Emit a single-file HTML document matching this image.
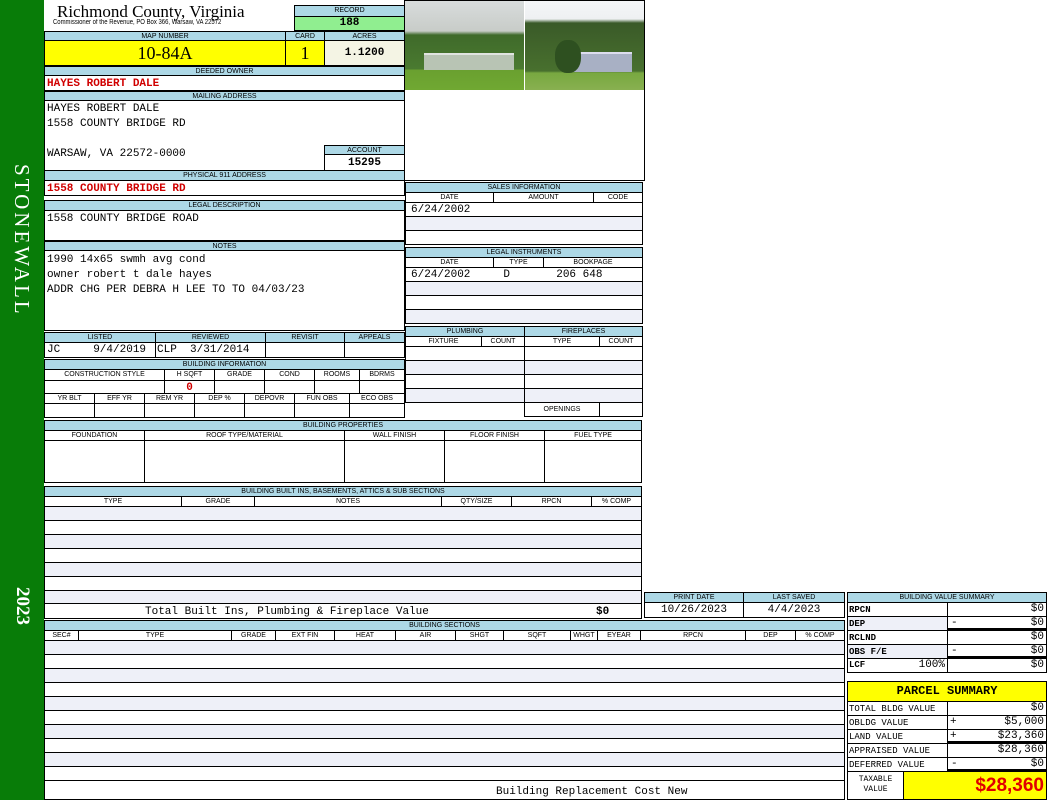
<!DOCTYPE html>
<html><head><style>
*{margin:0;padding:0;box-sizing:border-box}
body{width:1050px;height:800px;background:#fff;position:relative;overflow:hidden;font-family:"Liberation Sans",sans-serif}
div{position:absolute}
.h{background:#add8e6;border:1px solid #000;font-size:7px;text-align:center;line-height:9px;white-space:nowrap;overflow:hidden}
.c{border:1px solid #000;background:#fff}
.s{background:#eef0f8}
.m{font-family:"Liberation Mono",monospace;font-size:11px;white-space:nowrap}
.r{color:#d00000;font-weight:bold}
</style></head><body>
<div style="left:0;top:0;width:44px;height:800px;background:#087c08"></div>
<div style="left:9px;top:164px;writing-mode:vertical-rl;color:#fff;font:21px 'Liberation Serif',serif;letter-spacing:3px">STONEWALL</div>
<div style="left:11px;top:587px;writing-mode:vertical-rl;color:#fff;font:bold 19px 'Liberation Serif',serif">2023</div>

<div style="left:57px;top:2px;font:17px 'Liberation Serif',serif;white-space:nowrap">Richmond County, Virginia</div>
<div style="left:53px;top:19px;font-size:7px;white-space:nowrap;transform:scaleX(0.85);transform-origin:left">Commissioner of the Revenue, PO Box 366, Warsaw, VA 22572</div>
<div class="h" style="left:294px;top:5px;width:111px;height:12px;line-height:10px">RECORD</div>
<div class="c m" style="left:294px;top:16px;width:111px;height:15px;background:#90ee90;text-align:center;font-weight:bold;line-height:13px">188</div>

<div class="h" style="left:44px;top:31px;width:242px;height:10px">MAP NUMBER</div>
<div class="h" style="left:285px;top:31px;width:40px;height:10px">CARD</div>
<div class="h" style="left:324px;top:31px;width:81px;height:10px">ACRES</div>
<div class="c" style="left:44px;top:40px;width:242px;height:26px;background:#ffff00;text-align:center;font:18px 'Liberation Serif',serif;line-height:24px">10-84A</div>
<div class="c" style="left:285px;top:40px;width:40px;height:26px;background:#ffff00;text-align:center;font:18px 'Liberation Serif',serif;line-height:24px">1</div>
<div class="c m" style="left:324px;top:40px;width:81px;height:26px;background:#f4f4e4;text-align:center;font-weight:bold;line-height:24px">1.1200</div>

<div class="h" style="left:44px;top:66px;width:361px;height:10px">DEEDED OWNER</div>
<div class="c m r" style="left:44px;top:75px;width:361px;height:16px;padding-left:2px;line-height:16px">HAYES ROBERT DALE</div>
<div class="h" style="left:44px;top:91px;width:361px;height:10px">MAILING ADDRESS</div>
<div class="c m" style="left:44px;top:100px;width:361px;height:71px;padding-left:2px;line-height:15px;padding-top:1px">HAYES ROBERT DALE<br>1558 COUNTY BRIDGE RD<br><br>WARSAW, VA 22572-0000</div>
<div class="h" style="left:324px;top:145px;width:81px;height:10px">ACCOUNT</div>
<div class="c m" style="left:324px;top:154px;width:81px;height:17px;text-align:center;font-weight:bold;line-height:16px">15295</div>
<div class="h" style="left:44px;top:170px;width:361px;height:11px">PHYSICAL 911 ADDRESS</div>
<div class="c m r" style="left:44px;top:180px;width:361px;height:16px;padding-left:2px;line-height:16px">1558 COUNTY BRIDGE RD</div>

<div class="h" style="left:44px;top:200px;width:361px;height:11px">LEGAL DESCRIPTION</div>
<div class="c m" style="left:44px;top:210px;width:361px;height:31px;padding-left:2px;line-height:17px">1558 COUNTY BRIDGE ROAD</div>
<div class="h" style="left:44px;top:241px;width:361px;height:10px">NOTES</div>
<div class="c m" style="left:44px;top:250px;width:361px;height:81px;padding-left:2px;line-height:15px;padding-top:2px">1990 14x65 swmh avg cond<br>owner robert t dale hayes<br>ADDR CHG PER DEBRA H LEE TO TO 04/03/23</div>

<div class="h" style="left:44px;top:332px;width:112px;height:11px">LISTED</div>
<div class="h" style="left:155px;top:332px;width:111px;height:11px">REVIEWED</div>
<div class="h" style="left:265px;top:332px;width:80px;height:11px">REVISIT</div>
<div class="h" style="left:344px;top:332px;width:61px;height:11px">APPEALS</div>
<div class="c m" style="left:44px;top:342px;width:112px;height:16px;padding-left:2px;line-height:15px">JC&nbsp;&nbsp;&nbsp;&nbsp;&nbsp;9/4/2019</div>
<div class="c m" style="left:155px;top:342px;width:111px;height:16px;padding-left:1px;line-height:15px">CLP&nbsp;&nbsp;3/31/2014</div>
<div class="c" style="left:265px;top:342px;width:80px;height:16px"></div>
<div class="c" style="left:344px;top:342px;width:61px;height:16px"></div>

<div class="h" style="left:44px;top:359px;width:361px;height:11px">BUILDING INFORMATION</div>
<div class="h" style="left:44px;top:369px;width:121px;height:12px;background:#fff;line-height:10px">CONSTRUCTION STYLE</div>
<div class="h" style="left:164px;top:369px;width:51px;height:12px;background:#fff;line-height:10px">H SQFT</div>
<div class="h" style="left:214px;top:369px;width:51px;height:12px;background:#fff;line-height:10px">GRADE</div>
<div class="h" style="left:264px;top:369px;width:51px;height:12px;background:#fff;line-height:10px">COND</div>
<div class="h" style="left:314px;top:369px;width:46px;height:12px;background:#fff;line-height:10px">ROOMS</div>
<div class="h" style="left:359px;top:369px;width:46px;height:12px;background:#fff;line-height:10px">BDRMS</div>
<div class="c" style="left:44px;top:380px;width:121px;height:14px"></div>
<div class="c m r" style="left:164px;top:380px;width:51px;height:14px;text-align:center;line-height:14px">0</div>
<div class="c" style="left:214px;top:380px;width:51px;height:14px"></div>
<div class="c" style="left:264px;top:380px;width:51px;height:14px"></div>
<div class="c" style="left:314px;top:380px;width:46px;height:14px"></div>
<div class="c" style="left:359px;top:380px;width:46px;height:14px"></div>
<div class="h" style="left:44px;top:393px;width:51px;height:11px;background:#fff">YR BLT</div>
<div class="h" style="left:94px;top:393px;width:51px;height:11px;background:#fff">EFF YR</div>
<div class="h" style="left:144px;top:393px;width:51px;height:11px;background:#fff">REM YR</div>
<div class="h" style="left:194px;top:393px;width:51px;height:11px;background:#fff">DEP %</div>
<div class="h" style="left:244px;top:393px;width:51px;height:11px;background:#fff">DEPOVR</div>
<div class="h" style="left:294px;top:393px;width:56px;height:11px;background:#fff">FUN OBS</div>
<div class="h" style="left:349px;top:393px;width:56px;height:11px;background:#fff">ECO OBS</div>
<div class="c" style="left:44px;top:403px;width:51px;height:15px"></div>
<div class="c" style="left:94px;top:403px;width:51px;height:15px"></div>
<div class="c" style="left:144px;top:403px;width:51px;height:15px"></div>
<div class="c" style="left:194px;top:403px;width:51px;height:15px"></div>
<div class="c" style="left:244px;top:403px;width:51px;height:15px"></div>
<div class="c" style="left:294px;top:403px;width:56px;height:15px"></div>
<div class="c" style="left:349px;top:403px;width:56px;height:15px"></div>

<!-- photos -->
<div class="c" style="left:404px;top:0;width:241px;height:181px"></div>
<div style="left:405px;top:1px;width:119px;height:89px;background:linear-gradient(#d8dcdc 0,#c8ccc8 30px,#3f6a2a 34px,#4a7a30 68px,#6aa030 69px,#70a832 89px)"></div>
<div style="left:424px;top:53px;width:90px;height:17px;background:#b8c4b4;border-top:2px solid #e0e4e0"></div>
<div style="left:525px;top:1px;width:119px;height:89px;background:linear-gradient(#f4f6f8 0,#eef0f2 18px,#3a5a28 22px,#48702e 70px,#78a840 72px,#88b050 89px)"></div>
<div style="left:570px;top:52px;width:62px;height:20px;background:#a8b0c4;border-top:2px solid #dde"></div>
<div style="left:555px;top:40px;width:26px;height:33px;background:#2e5020;border-radius:45%"></div>

<div class="h" style="left:405px;top:182px;width:238px;height:11px">SALES INFORMATION</div>
<div class="h" style="left:405px;top:192px;width:89px;height:11px;background:#fff">DATE</div>
<div class="h" style="left:493px;top:192px;width:101px;height:11px;background:#fff">AMOUNT</div>
<div class="h" style="left:593px;top:192px;width:50px;height:11px;background:#fff">CODE</div>
<div class="c m" style="left:405px;top:202px;width:238px;height:15px;padding-left:5px;line-height:15px">6/24/2002</div>
<div class="c s" style="left:405px;top:216px;width:238px;height:15px"></div>
<div class="c" style="left:405px;top:230px;width:238px;height:15px"></div>

<div class="h" style="left:405px;top:247px;width:238px;height:11px">LEGAL INSTRUMENTS</div>
<div class="h" style="left:405px;top:257px;width:89px;height:11px;background:#fff">DATE</div>
<div class="h" style="left:493px;top:257px;width:51px;height:11px;background:#fff">TYPE</div>
<div class="h" style="left:543px;top:257px;width:100px;height:11px;background:#fff">BOOKPAGE</div>
<div class="c m" style="left:405px;top:267px;width:238px;height:15px;padding-left:5px;line-height:15px;white-space:pre">6/24/2002     D       206 648</div>
<div class="c s" style="left:405px;top:281px;width:238px;height:15px"></div>
<div class="c" style="left:405px;top:295px;width:238px;height:15px"></div>
<div class="c s" style="left:405px;top:309px;width:238px;height:15px"></div>

<div class="h" style="left:405px;top:326px;width:120px;height:11px">PLUMBING</div>
<div class="h" style="left:524px;top:326px;width:119px;height:11px">FIREPLACES</div>
<div class="h" style="left:405px;top:336px;width:77px;height:11px;background:#fff">FIXTURE</div>
<div class="h" style="left:481px;top:336px;width:44px;height:11px;background:#fff">COUNT</div>
<div class="h" style="left:524px;top:336px;width:76px;height:11px;background:#fff">TYPE</div>
<div class="h" style="left:599px;top:336px;width:44px;height:11px;background:#fff">COUNT</div>
<div class="c" style="left:405px;top:346px;width:120px;height:15px"></div><div class="c" style="left:524px;top:346px;width:119px;height:15px"></div>
<div class="c s" style="left:405px;top:360px;width:120px;height:15px"></div><div class="c s" style="left:524px;top:360px;width:119px;height:15px"></div>
<div class="c" style="left:405px;top:374px;width:120px;height:15px"></div><div class="c" style="left:524px;top:374px;width:119px;height:15px"></div>
<div class="c s" style="left:405px;top:388px;width:120px;height:15px"></div><div class="c s" style="left:524px;top:388px;width:119px;height:15px"></div>
<div class="h" style="left:524px;top:402px;width:76px;height:15px;background:#fff;line-height:14px">OPENINGS</div>
<div class="c" style="left:599px;top:402px;width:44px;height:15px"></div>

<div class="h" style="left:44px;top:420px;width:598px;height:11px">BUILDING PROPERTIES</div>
<div class="h" style="left:44px;top:430px;width:101px;height:11px;background:#fff">FOUNDATION</div>
<div class="h" style="left:144px;top:430px;width:201px;height:11px;background:#fff">ROOF TYPE/MATERIAL</div>
<div class="h" style="left:344px;top:430px;width:101px;height:11px;background:#fff">WALL FINISH</div>
<div class="h" style="left:444px;top:430px;width:101px;height:11px;background:#fff">FLOOR FINISH</div>
<div class="h" style="left:544px;top:430px;width:98px;height:11px;background:#fff">FUEL TYPE</div>
<div class="c" style="left:44px;top:440px;width:101px;height:43px"></div>
<div class="c" style="left:144px;top:440px;width:201px;height:43px"></div>
<div class="c" style="left:344px;top:440px;width:101px;height:43px"></div>
<div class="c" style="left:444px;top:440px;width:101px;height:43px"></div>
<div class="c" style="left:544px;top:440px;width:98px;height:43px"></div>

<div class="h" style="left:44px;top:486px;width:598px;height:11px">BUILDING BUILT INS, BASEMENTS, ATTICS &amp; SUB SECTIONS</div>
<div class="h" style="left:44px;top:496px;width:138px;height:11px;background:#fff">TYPE</div>
<div class="h" style="left:181px;top:496px;width:74px;height:11px;background:#fff">GRADE</div>
<div class="h" style="left:254px;top:496px;width:188px;height:11px;background:#fff">NOTES</div>
<div class="h" style="left:441px;top:496px;width:71px;height:11px;background:#fff">QTY/SIZE</div>
<div class="h" style="left:511px;top:496px;width:81px;height:11px;background:#fff">RPCN</div>
<div class="h" style="left:591px;top:496px;width:51px;height:11px;background:#fff">% COMP</div>
<div class="c s" style="left:44px;top:506px;width:598px;height:15px"></div>
<div class="c" style="left:44px;top:520px;width:598px;height:15px"></div>
<div class="c s" style="left:44px;top:534px;width:598px;height:15px"></div>
<div class="c" style="left:44px;top:548px;width:598px;height:15px"></div>
<div class="c s" style="left:44px;top:562px;width:598px;height:15px"></div>
<div class="c" style="left:44px;top:576px;width:598px;height:15px"></div>
<div class="c s" style="left:44px;top:590px;width:598px;height:15px"></div>
<div class="c m" style="left:44px;top:603px;width:598px;height:16px;line-height:16px"><span style="position:absolute;left:100px">Total Built Ins, Plumbing &amp; Fireplace Value</span><span style="position:absolute;left:551px;font-weight:bold">$0</span></div>

<div class="h" style="left:644px;top:592px;width:100px;height:11px">PRINT DATE</div>
<div class="h" style="left:743px;top:592px;width:102px;height:11px">LAST SAVED</div>
<div class="c m" style="left:644px;top:602px;width:100px;height:16px;text-align:center;line-height:15px">10/26/2023</div>
<div class="c m" style="left:743px;top:602px;width:102px;height:16px;text-align:center;line-height:15px">4/4/2023</div>

<div class="h" style="left:44px;top:620px;width:801px;height:11px">BUILDING SECTIONS</div>
<div class="h" style="left:44px;top:630px;width:35px;height:11px;background:#fff">SEC#</div>
<div class="h" style="left:78px;top:630px;width:154px;height:11px;background:#fff">TYPE</div>
<div class="h" style="left:231px;top:630px;width:45px;height:11px;background:#fff">GRADE</div>
<div class="h" style="left:275px;top:630px;width:60px;height:11px;background:#fff">EXT FIN</div>
<div class="h" style="left:334px;top:630px;width:62px;height:11px;background:#fff">HEAT</div>
<div class="h" style="left:395px;top:630px;width:61px;height:11px;background:#fff">AIR</div>
<div class="h" style="left:455px;top:630px;width:49px;height:11px;background:#fff">SHGT</div>
<div class="h" style="left:503px;top:630px;width:68px;height:11px;background:#fff">SQFT</div>
<div class="h" style="left:570px;top:630px;width:28px;height:11px;background:#fff">WHGT</div>
<div class="h" style="left:597px;top:630px;width:44px;height:11px;background:#fff">EYEAR</div>
<div class="h" style="left:640px;top:630px;width:106px;height:11px;background:#fff">RPCN</div>
<div class="h" style="left:745px;top:630px;width:51px;height:11px;background:#fff">DEP</div>
<div class="h" style="left:795px;top:630px;width:50px;height:11px;background:#fff">% COMP</div>
<div class="c s" style="left:44px;top:640px;width:801px;height:15px"></div>
<div class="c" style="left:44px;top:654px;width:801px;height:15px"></div>
<div class="c s" style="left:44px;top:668px;width:801px;height:15px"></div>
<div class="c" style="left:44px;top:682px;width:801px;height:15px"></div>
<div class="c s" style="left:44px;top:696px;width:801px;height:15px"></div>
<div class="c" style="left:44px;top:710px;width:801px;height:15px"></div>
<div class="c s" style="left:44px;top:724px;width:801px;height:15px"></div>
<div class="c" style="left:44px;top:738px;width:801px;height:15px"></div>
<div class="c s" style="left:44px;top:752px;width:801px;height:15px"></div>
<div class="c" style="left:44px;top:766px;width:801px;height:15px"></div>
<div class="c m" style="left:44px;top:780px;width:801px;height:20px;line-height:22px"><span style="position:absolute;left:451px">Building Replacement Cost New</span></div>

<div class="h" style="left:847px;top:592px;width:200px;height:11px">BUILDING VALUE SUMMARY</div>
<div class="c m" style="left:847px;top:602px;width:101px;height:15px;font-size:9px;padding-left:1px;line-height:14px;font-weight:bold">RPCN</div>
<div class="c m" style="left:947px;top:602px;width:100px;height:15px;text-align:right;padding-right:2px;line-height:13px">$0</div>
<div class="c m s" style="left:847px;top:616px;width:101px;height:15px;font-size:9px;padding-left:1px;line-height:14px;font-weight:bold">DEP</div>
<div class="c m" style="left:947px;top:616px;width:100px;height:15px;line-height:13px;border-bottom:3px solid #000"><span style="position:absolute;left:3px">-</span><span style="position:absolute;right:2px">$0</span></div>
<div class="c m" style="left:847px;top:630px;width:101px;height:15px;font-size:9px;padding-left:1px;line-height:14px;font-weight:bold">RCLND</div>
<div class="c m" style="left:947px;top:630px;width:100px;height:15px;text-align:right;padding-right:2px;line-height:13px">$0</div>
<div class="c m s" style="left:847px;top:644px;width:101px;height:15px;font-size:9px;padding-left:1px;line-height:14px;font-weight:bold">OBS F/E</div>
<div class="c m" style="left:947px;top:644px;width:100px;height:15px;line-height:13px;border-bottom:3px solid #000"><span style="position:absolute;left:3px">-</span><span style="position:absolute;right:2px">$0</span></div>
<div class="c m" style="left:847px;top:658px;width:101px;height:15px;line-height:13px"><span style="position:absolute;left:1px;font-size:9px;font-weight:bold">LCF</span><span style="position:absolute;right:2px">100%</span></div>
<div class="c m" style="left:947px;top:658px;width:100px;height:15px;text-align:right;padding-right:2px;line-height:13px">$0</div>

<div class="c m" style="left:847px;top:681px;width:200px;height:21px;background:#ffff00;text-align:center;font-weight:bold;font-size:12px;line-height:19px">PARCEL SUMMARY</div>
<div class="c m" style="left:847px;top:701px;width:101px;height:15px;font-size:9px;padding-left:1px;line-height:14px">TOTAL BLDG VALUE</div>
<div class="c m" style="left:947px;top:701px;width:100px;height:15px;text-align:right;padding-right:2px;line-height:13px">$0</div>
<div class="c m" style="left:847px;top:715px;width:101px;height:15px;font-size:9px;padding-left:1px;line-height:14px">OBLDG VALUE</div>
<div class="c m" style="left:947px;top:715px;width:100px;height:15px;line-height:13px"><span style="position:absolute;left:2px">+</span><span style="position:absolute;right:2px">$5,000</span></div>
<div class="c m" style="left:847px;top:729px;width:101px;height:15px;font-size:9px;padding-left:1px;line-height:14px">LAND VALUE</div>
<div class="c m" style="left:947px;top:729px;width:100px;height:15px;line-height:13px;border-bottom:3px solid #000"><span style="position:absolute;left:2px">+</span><span style="position:absolute;right:2px">$23,360</span></div>
<div class="c m" style="left:847px;top:743px;width:101px;height:15px;font-size:9px;padding-left:1px;line-height:14px">APPRAISED VALUE</div>
<div class="c m" style="left:947px;top:743px;width:100px;height:15px;text-align:right;padding-right:2px;line-height:13px">$28,360</div>
<div class="c m" style="left:847px;top:757px;width:101px;height:15px;font-size:9px;padding-left:1px;line-height:14px">DEFERRED VALUE</div>
<div class="c m" style="left:947px;top:757px;width:100px;height:15px;line-height:13px;border-bottom:3px solid #000"><span style="position:absolute;left:3px">-</span><span style="position:absolute;right:2px">$0</span></div>
<div class="c m" style="left:847px;top:771px;width:57px;height:29px;font-size:8px;text-align:center;line-height:10px;padding-top:3px">TAXABLE<br>VALUE</div>
<div class="c" style="left:903px;top:771px;width:144px;height:29px;background:#ffff00;color:#e00000;font-weight:bold;font-size:19px;text-align:right;padding-right:2px;line-height:27px">$28,360</div>
</body></html>
